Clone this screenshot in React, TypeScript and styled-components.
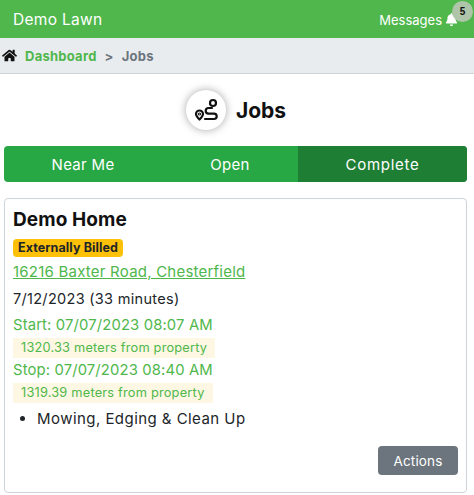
import React from 'react'
import styled, { createGlobalStyle } from 'styled-components'
import { FaBell, FaHome } from 'react-icons/fa'

const GlobalStyle = createGlobalStyle`
  html, body {
    margin: 0;
    padding: 0;
    background: #fff;
    font-family: 'Inter', 'Open Sans', sans-serif;
    color: #212529;
  }
  * { box-sizing: border-box; }
`

const TopBar = styled.header`
  height: 38px;
  background: #4fb74b;
  color: #fff;
  display: flex;
  align-items: center;
  justify-content: space-between;
  padding: 0 4px 0 13px;
`

const Brand = styled.div`
  font-size: 15.5px;
  letter-spacing: 0.3px;
`

const MessagesLink = styled.div`
  position: relative;
  display: flex;
  align-items: center;
  gap: 3px;
  font-size: 13px;
  padding-right: 12px;
  margin-top: 1px;
`

const CountBadge = styled.span`
  position: absolute;
  top: -11px;
  right: -3px;
  width: 21px;
  height: 21px;
  border-radius: 50%;
  background: #afc5a9;
  color: #111;
  font-family: 'Liberation Sans', sans-serif;
  font-size: 10px;
  font-weight: 700;
  display: flex;
  align-items: center;
  justify-content: center;
`

const Crumbs = styled.nav`
  height: 36px;
  background: #e9ecef;
  border-bottom: 1px solid #ced4da;
  display: flex;
  align-items: center;
  padding: 0 0 0 2px;
  font-size: 13px;
  font-weight: 700;
  letter-spacing: 0.25px;
  color: #6c757d;
`

const CrumbLink = styled.a`
  color: #4fb74b;
  margin: 0 8px 0 8px;
`

const CrumbSep = styled.span`
  margin-right: 8px;
`

const TitleRow = styled.div`
  height: 72px;
  display: flex;
  align-items: center;
  justify-content: center;
  gap: 10px;
  padding-right: 2px;
`

const IconDisc = styled.div`
  width: 40px;
  height: 40px;
  border-radius: 50%;
  background: #fff;
  box-shadow: 0 0 8px rgba(0, 0, 0, 0.35);
  display: flex;
  align-items: center;
  justify-content: center;
`

const PageTitle = styled.h1`
  margin: 0;
  font-size: 21px;
  font-weight: 700;
  color: #111;
`

const Tabs = styled.div`
  margin: 0 7px 0 4px;
  height: 36px;
  display: grid;
  grid-template-columns: 158px 136px 1fr;
  background: #28a745;
  border-radius: 4px;
  overflow: hidden;
`

const Tab = styled.div<{ $active?: boolean }>`
  display: flex;
  align-items: center;
  justify-content: center;
  color: #fff;
  font-size: 15px;
  letter-spacing: ${(props) => (props.$active ? '0.7px' : '0.3px')};
  background: ${(props) => (props.$active ? '#1e7e34' : 'transparent')};
`

const Card = styled.section`
  margin: 16px 7px 0 4px;
  height: 295px;
  border: 1px solid #ced4da;
  border-radius: 4px;
  padding: 10px 8px 0 8px;
  display: flex;
  flex-direction: column;
  align-items: flex-start;
`

const CardTitle = styled.h2`
  margin: 0 0 8px 0;
  font-size: 19px;
  font-weight: 700;
  letter-spacing: 0.1px;
  line-height: 22px;
  color: #111;
`

const BilledBadge = styled.span`
  background: #ffc107;
  color: #212529;
  border-radius: 4px;
  font-size: 12.5px;
  font-weight: 700;
  letter-spacing: 0.1px;
  padding: 0 5px;
  height: 18px;
  line-height: 18px;
`

const Address = styled.a`
  color: #4fb74b;
  text-decoration: underline;
  font-size: 15px;
  letter-spacing: 0.22px;
  line-height: 21px;
  margin-top: 4px;
`

const DateLine = styled.div`
  font-size: 14.5px;
  letter-spacing: 0.3px;
  line-height: 21px;
  margin-top: 6px;
`

const TimeLine = styled.div<{ $first?: boolean }>`
  color: #4fb74b;
  font-size: 14.8px;
  letter-spacing: 0.15px;
  line-height: 21px;
  margin-top: ${(props) => (props.$first ? '6px' : '0')};
`

const Distance = styled.div`
  background: #fdf7e3;
  color: #4fb74b;
  font-size: 12.8px;
  letter-spacing: 0.2px;
  line-height: 20px;
  padding: 0 8px;
  margin-top: 2px;
  margin-bottom: 2px;
`

const ServiceList = styled.ul`
  margin: 3px 0 0 0;
  padding: 0 0 0 24px;
  font-size: 15px;
  letter-spacing: 0.45px;
  line-height: 22px;
`

const ActionRow = styled.div`
  margin-top: auto;
  margin-bottom: 17px;
  align-self: flex-end;
`

const ActionButton = styled.button`
  width: 80px;
  height: 29px;
  border: 0;
  border-radius: 4px;
  background: #6c757d;
  color: #fff;
  font-family: inherit;
  font-size: 13.5px;
  letter-spacing: 0.15px;
`

function RouteIcon() {
  return (
    <svg width="24" height="24" viewBox="0 0 24 24" fill="none" stroke="#111" strokeWidth="2.2" strokeLinecap="round" strokeLinejoin="round">
      <circle cx="19" cy="5" r="3" />
      <path d="M18 10 H14.5 a2.8 2.8 0 0 0 0 5.6 H20 a2.7 2.7 0 0 1 0 5.4 H11" />
      <path d="M5.5 21.5 C3.5 19.5 2 18 2 16 a3.5 3.5 0 0 1 7 0 C9 18 7.5 19.5 5.5 21.5 Z" />
      <circle cx="5.5" cy="16" r="0.5" />
    </svg>
  )
}

export default function App() {
  return (
    <>
      <GlobalStyle />
      <TopBar>
        <Brand>Demo Lawn</Brand>
        <MessagesLink>
          Messages
          <FaBell size={13} />
          <CountBadge>5</CountBadge>
        </MessagesLink>
      </TopBar>
      <Crumbs>
        <FaHome size={15} color="#111" />
        <CrumbLink>Dashboard</CrumbLink>
        <CrumbSep>&gt;</CrumbSep>
        Jobs
      </Crumbs>
      <TitleRow>
        <IconDisc>
          <RouteIcon />
        </IconDisc>
        <PageTitle>Jobs</PageTitle>
      </TitleRow>
      <Tabs>
        <Tab>Near Me</Tab>
        <Tab>Open</Tab>
        <Tab $active>Complete</Tab>
      </Tabs>
      <Card>
        <CardTitle>Demo Home</CardTitle>
        <BilledBadge>Externally Billed</BilledBadge>
        <Address>16216 Baxter Road, Chesterfield</Address>
        <DateLine>7/12/2023 (33 minutes)</DateLine>
        <TimeLine $first>Start: 07/07/2023 08:07 AM</TimeLine>
        <Distance>1320.33 meters from property</Distance>
        <TimeLine>Stop: 07/07/2023 08:40 AM</TimeLine>
        <Distance>1319.39 meters from property</Distance>
        <ServiceList>
          <li>Mowing, Edging &amp; Clean Up</li>
        </ServiceList>
        <ActionRow>
          <ActionButton>Actions</ActionButton>
        </ActionRow>
      </Card>
    </>
  )
}
